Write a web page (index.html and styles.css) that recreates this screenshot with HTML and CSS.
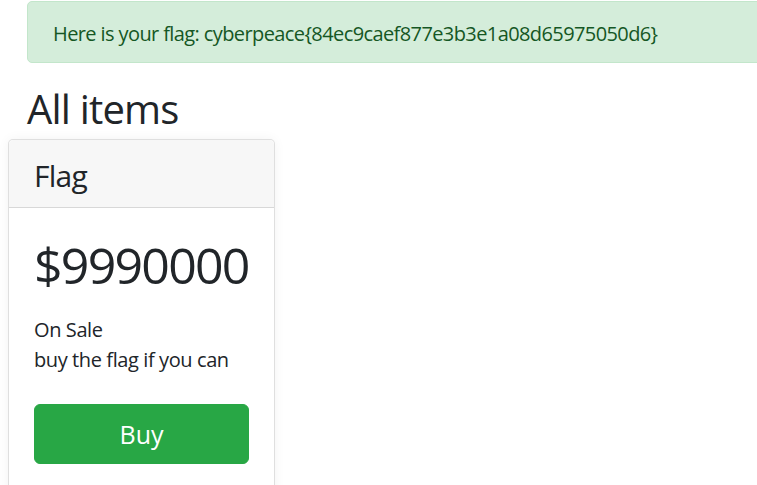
FILE: index.html
```html
<!DOCTYPE html>
<html>
<head>
<meta charset="utf-8">
<link rel="stylesheet" href="styles.css">
</head>
<body>
<div class="container">
  <div class="alert">Here is your flag: cyberpeace{84ec9caef877e3b3e1a08d65975050d6}</div>
  <h2 class="title">All items</h2>
  <div class="card">
    <div class="card-header">Flag</div>
    <div class="card-body">
      <h1 class="price">$9990000</h1>
      <p class="desc">On Sale<br>buy the flag if you can</p>
      <button class="btn">Buy</button>
    </div>
  </div>
</div>
</body>
</html>
```
FILE: styles.css
```css
html, body {
  margin: 0;
  padding: 0;
  overflow: hidden;
  background: #fff;
}
body {
  font-family: "Open Sans", "Noto Sans", sans-serif;
  color: #212529;
  font-size: 20px;
  line-height: 1.5;
}
.container {
  width: 1100px;
  padding: 1px 0 0 27px;
  box-sizing: border-box;
}
.alert {
  background: #d4edda;
  border: 1px solid #c3e6cb;
  color: #155724;
  border-radius: 5px;
  padding: 17px 25px 13px;
  line-height: 30px;
  letter-spacing: -0.6px;
  margin: 0 0 20px 0;
}
.title {
  font-size: 40px;
  font-weight: 400;
  line-height: 48px;
  letter-spacing: -0.8px;
  padding-top: 2px;
  margin: 0 0 6px 0;
}
.card {
  margin-left: -19px;
  width: 267px;
  box-sizing: border-box;
  border: 1px solid rgba(0,0,0,.125);
  border-radius: 5px;
  box-shadow: 0 0 12px rgba(0,0,0,.05);
  background: #fff;
}
.card-header {
  background: #f7f7f7;
  border-bottom: 1px solid rgba(0,0,0,.125);
  border-radius: 5px 5px 0 0;
  padding: 17px 25px 13px;
  font-size: 30px;
  line-height: 37px;
  letter-spacing: -0.75px;
}
.card-body {
  padding: 27px 25px 40px;
}
.price {
  font-size: 50px;
  font-weight: 400;
  line-height: 60px;
  letter-spacing: -1.75px;
  margin: 0 0 20px 0;
}
.desc {
  margin: 0 0 29px 0;
  line-height: 30px;
  letter-spacing: -0.4px;
}
.btn {
  display: block;
  width: 100%;
  height: 60px;
  background: #28a745;
  border: 1px solid #28a745;
  border-radius: 6px;
  color: #fff;
  font-family: inherit;
  font-size: 25px;
  padding: 0 0 0 0;
}
```
